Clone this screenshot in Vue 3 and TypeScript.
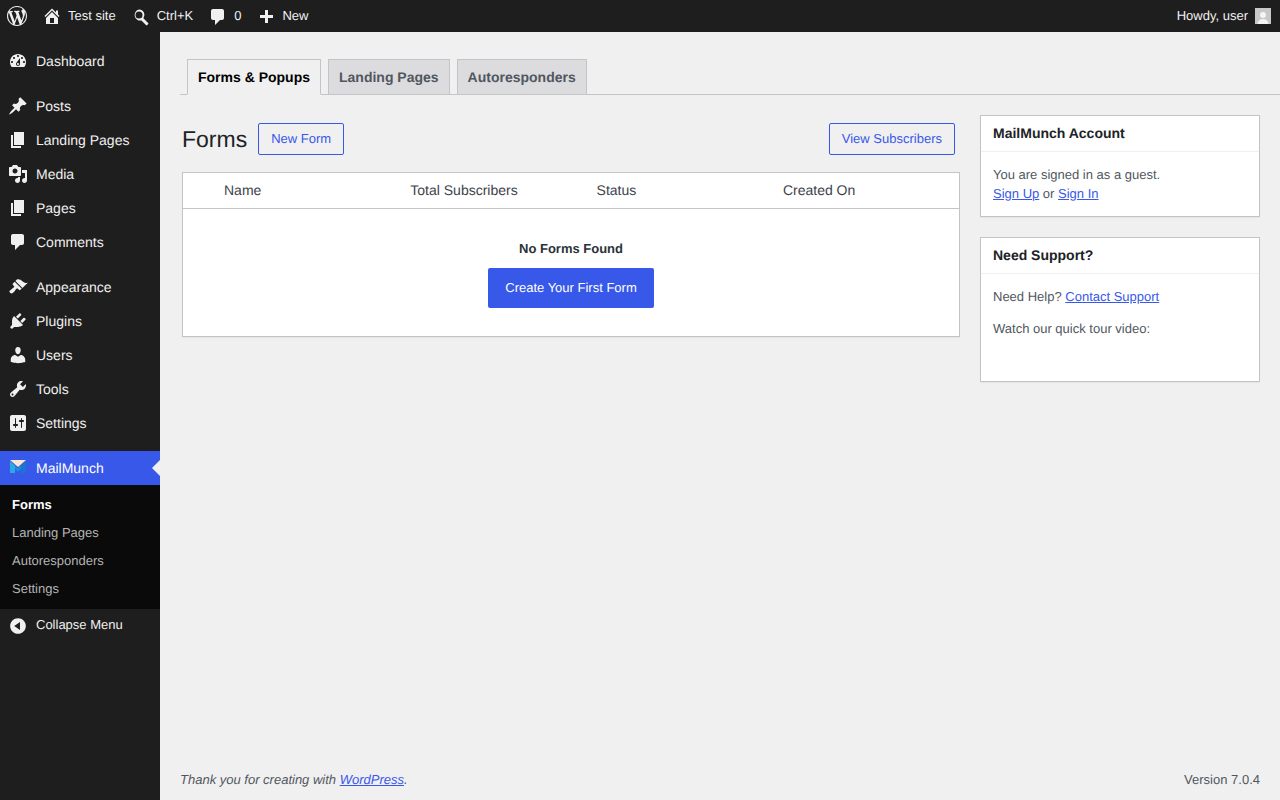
<script setup lang="ts">
type MenuItem = { label: string; icon: string; gapBefore?: boolean }

const pageIcon = "M6 15V2h10v13H6zm-1 1h8v2H3V5h2v11z"

const menu: MenuItem[] = [
  { label: "Dashboard", icon: "M3.76 16h12.48c1.1-1.37 1.76-3.11 1.76-5 0-4.42-3.58-8-8-8s-8 3.58-8 8c0 1.89.66 3.63 1.76 5zM10 4c.55 0 1 .45 1 1s-.45 1-1 1-1-.45-1-1 .45-1 1-1zM6 6c.55 0 1 .45 1 1s-.45 1-1 1-1-.45-1-1 .45-1 1-1zm8 0c.55 0 1 .45 1 1s-.45 1-1 1-1-.45-1-1 .45-1 1-1zm-5.37 5.55L12 7v6c0 1.1-.9 2-2 2s-2-.9-2-2c0-.57.24-1.08.63-1.45zM4 10c.55 0 1 .45 1 1s-.45 1-1 1-1-.45-1-1 .45-1 1-1zm12 0c.55 0 1 .45 1 1s-.45 1-1 1-1-.45-1-1 .45-1 1-1zm-5 3c0-.55-.45-1-1-1s-1 .45-1 1 .45 1 1 1 1-.45 1-1z" },
  { label: "Posts", gapBefore: true, icon: "M10.44 3.02l1.82-1.82 6.36 6.35-1.83 1.82c-1.05-.68-2.48-.57-3.41.36l-.75.75c-.92.93-1.04 2.35-.35 3.41l-1.83 1.82-2.41-2.41-2.8 2.79c-.42.42-3.38 2.71-3.8 2.29s1.86-3.39 2.28-3.81l2.79-2.79L4.1 9.36l1.83-1.82c1.05.69 2.48.57 3.4-.36l.75-.75c.93-.92 1.05-2.35.36-3.41z" },
  { label: "Landing Pages", icon: pageIcon },
  { label: "Media", icon: "M13 11V4c0-.55-.45-1-1-1h-1.67L9 1H5L3.67 3H2c-.55 0-1 .45-1 1v7c0 .55.45 1 1 1h10c.55 0 1-.45 1-1zM7 4.5c1.38 0 2.5 1.12 2.5 2.5S8.38 9.5 7 9.5 4.5 8.38 4.5 7 5.62 4.5 7 4.5zM14 6h5v10.5c0 1.38-1.12 2.5-2.5 2.5S14 17.88 14 16.5s1.12-2.5 2.5-2.5c.17 0 .34.02.5.05V9h-3V6zm-4 8.05V13h2v3.5c0 1.38-1.12 2.5-2.5 2.5S7 17.88 7 16.5 8.12 14 9.5 14c.17 0 .34.02.5.05z" },
  { label: "Pages", icon: pageIcon },
  { label: "Comments", icon: "M5 2h9c1.1 0 2 .9 2 2v7c0 1.1-.9 2-2 2h-2l-5 5v-5H5c-1.1 0-2-.9-2-2V4c0-1.1.9-2 2-2z" },
  { label: "Appearance", gapBefore: true, icon: "M14.48 11.06L7.41 3.99l1.5-1.5c.5-.56 2.3-.47 3.51.32 1.21.8 1.43 1.28 2.91 2.1 1.18.64 2.45 1.26 4.45.85zm-.71.71L6.7 4.7 4.93 6.47c-.39.39-.39 1.02 0 1.41l1.06 1.06c.39.39.39 1.03 0 1.42-.6.6-1.43 1.11-2.21 1.69-.35.26-.7.53-1.01.84C1.43 13.23.78 14.4 2.1 15.7c1.31 1.32 2.48.67 3.8-.67.31-.31.58-.66.84-1.01.58-.78 1.09-1.61 1.69-2.21.39-.39 1.03-.39 1.42 0l1.06 1.06c.39.39 1.02.39 1.41 0z" },
  { label: "Plugins", icon: "M13.11 4.36L9.87 7.6 8 5.73l3.24-3.24c.35-.34 1.05-.2 1.56.32.52.51.66 1.21.31 1.55zm-8 1.77l.91-1.12 9.01 9.01-1.19.84c-.71.71-2.63 1.16-3.82 1.16H6.14L4.9 17.26c-.59.59-1.54.59-2.12 0-.59-.58-.59-1.53 0-2.12l1.24-1.24v-3.88c0-1.13.4-3.19 1.09-3.89zm7.26 3.97l3.24-3.24c.34-.35 1.04-.21 1.55.31.52.51.66 1.21.31 1.55l-3.24 3.25z" },
  { label: "Users", icon: "M10 9.25c-2.27 0-2.73-3.44-2.73-3.44C7 4.02 7.82 2 9.97 2c2.16 0 2.98 2.02 2.71 3.81 0 0-.41 3.44-2.68 3.44zm0 2.57L12.72 10c2.39 0 4.52 2.33 4.52 4.53v2.49s-3.65 1.13-7.24 1.13c-3.65 0-7.24-1.13-7.24-1.13v-2.49c0-2.25 1.94-4.48 4.47-4.48z" },
  { label: "Tools", icon: "M16.68 9.77c-1.34 1.34-3.3 1.67-4.95.99l-5.41 6.52c-.99.99-2.59.99-3.58 0s-.99-2.59 0-3.57l6.52-5.42c-.68-1.65-.35-3.61.99-4.95 1.28-1.28 3.12-1.62 4.72-1.06l-2.89 2.89 2.82 2.82 2.86-2.87c.53 1.58.18 3.39-1.08 4.65zM3.81 16.21c.4.39 1.04.39 1.43 0 .4-.4.4-1.04 0-1.43-.39-.4-1.03-.4-1.43 0-.39.39-.39 1.03 0 1.43z" },
  { label: "Settings", icon: "M18 16V4c0-1.1-.9-2-2-2H4c-1.1 0-2 .9-2 2v12c0 1.1.9 2 2 2h12c1.1 0 2-.9 2-2zM8 11h1c.55 0 1 .45 1 1s-.45 1-1 1H8v1.5c0 .28-.22.5-.5.5s-.5-.22-.5-.5V13H6c-.55 0-1-.45-1-1s.45-1 1-1h1V5.5c0-.28.22-.5.5-.5s.5.22.5.5V11zm5-2h-1c-.55 0-1-.45-1-1s.45-1 1-1h1V5.5c0-.28.22-.5.5-.5s.5.22.5.5V7h1c.55 0 1 .45 1 1s-.45 1-1 1h-1v5.5c0 .28-.22.5-.5.5s-.5-.22-.5-.5V9z" },
]

const submenu = ["Forms", "Landing Pages", "Autoresponders", "Settings"]
const tabs = ["Forms & Popups", "Landing Pages", "Autoresponders"]
const columns = ["Name", "Total Subscribers", "Status", "Created On"]

const wpLogo = "M20 10c0-5.51-4.49-10-10-10C4.48 0 0 4.49 0 10c0 5.52 4.48 10 10 10 5.51 0 10-4.48 10-10zM7.78 15.37L4.37 6.22c.55-.02 1.17-.08 1.17-.08.5-.06.44-1.13-.06-1.11 0 0-1.45.11-2.37.11-.18 0-.37 0-.58-.01C4.12 2.69 6.87 1.11 10 1.11c2.33 0 4.45.87 6.05 2.34-.68-.11-1.65.39-1.65 1.58 0 .74.45 1.36.9 2.1.35.61.55 1.36.55 2.46 0 1.49-1.4 5-1.4 5l-3.03-8.37c.54-.02.82-.17.82-.17.5-.05.44-1.25-.06-1.22 0 0-1.44.12-2.38.12-.87 0-2.33-.12-2.33-.12-.5-.03-.56 1.2-.06 1.22l.92.08 1.26 3.41zM17.41 10c.24-.64.74-1.87.43-4.25.7 1.29 1.05 2.71 1.05 4.25 0 3.29-1.73 6.24-4.4 7.78.97-2.59 1.94-5.2 2.92-7.78zM6.1 18.09C3.12 16.65 1.11 13.53 1.11 10c0-1.3.23-2.48.72-3.59C3.25 10.3 4.67 14.2 6.1 18.09zm4.03-6.63l2.58 6.98c-.86.29-1.76.45-2.71.45-.79 0-1.57-.11-2.29-.33.81-2.38 1.62-4.74 2.42-7.1z"
</script>

<template>
  <div class="page">
    <header class="adminbar">
      <div class="bar-left">
        <svg class="wp-logo" viewBox="0 0 20 20"><path :d="wpLogo" /></svg>
        <div class="bar-item">
          <svg class="bar-icon" viewBox="0 0 20 20"><path d="M16 8.5l1.53 1.53-1.06 1.06L10 4.62l-6.47 6.47-1.06-1.06L10 2.5l4 4v-2h2v4zm-6-2.46l6 5.99V18H4v-5.97zM12 17v-5H8v5h4z" /></svg>
          <span>Test site</span>
        </div>
        <div class="bar-item">
          <svg class="bar-icon low" viewBox="0 0 20 20"><path d="M8 2.5a5.5 5.5 0 0 1 4.4 8.8l4.9 4.9c.2.2.2.5 0 .7l-1.4 1.4c-.2.2-.5.2-.7 0l-4.8-4.9A5.5 5.5 0 1 1 8 2.5zm0 2a3.5 3.5 0 1 0 0 7 3.5 3.5 0 0 0 0-7z" /></svg>
          <span>Ctrl+K</span>
        </div>
        <div class="bar-item">
          <svg class="bar-icon low" viewBox="0 0 20 20"><path d="M5 2h9c1.1 0 2 .9 2 2v7c0 1.1-.9 2-2 2h-2l-5 5v-5H5c-1.1 0-2-.9-2-2V4c0-1.1.9-2 2-2z" /></svg>
          <span>0</span>
        </div>
        <div class="bar-item">
          <svg class="bar-icon" viewBox="0 0 20 20"><path d="M17 9v3h-5v5H9v-5H4V9h5V4h3v5h5z" /></svg>
          <span>New</span>
        </div>
      </div>
      <div class="bar-right">
        <span>Howdy, user</span>
        <svg class="avatar" viewBox="0 0 16 16">
          <rect width="16" height="16" fill="#c8c8c8" />
          <circle cx="8" cy="7" r="3" fill="#f4f4f4" />
          <path d="M2.5 16c.4-3.4 2.6-5 5.5-5s5.1 1.6 5.5 5z" fill="#f4f4f4" />
        </svg>
      </div>
    </header>

    <div class="body-row">
      <aside class="sidebar">
        <nav class="menu">
          <a v-for="item in menu" :key="item.label" class="menu-item" :class="{ spaced: item.gapBefore }">
            <svg class="menu-icon" viewBox="0 0 20 20"><path :d="item.icon" /></svg>
            <span>{{ item.label }}</span>
          </a>
          <a class="menu-item current">
            <svg class="menu-icon" viewBox="0 0 20 20">
              <path d="M2 2h16l-8 7z" fill="#fbe6d0" />
              <path d="M2 3l5 4.5V15H2z" fill="#29abe2" />
              <path d="M7 7.5l3 2.7 3-2.7V11l-3 2.500L7 11z" fill="#1b8fd6" />
              <path d="M18 3l-5 4.5V15h5z" fill="#1b75d0" />
            </svg>
            <span>MailMunch</span>
          </a>
          <ul class="submenu">
            <li v-for="(sub, i) in submenu" :key="sub" :class="{ active: i === 0 }">{{ sub }}</li>
          </ul>
          <a class="collapse">
            <svg class="menu-icon" viewBox="0 0 20 20"><path d="M10 2.16c4.33 0 7.84 3.51 7.84 7.84s-3.51 7.84-7.84 7.84S2.16 14.33 2.16 10 5.71 2.16 10 2.16zm2 11.72V6.12L6.18 9.97z" /></svg>
            <span>Collapse Menu</span>
          </a>
        </nav>
      </aside>

      <main class="content">
        <div class="tabs">
          <a v-for="(tab, i) in tabs" :key="tab" class="tab" :class="{ on: i === 0 }">{{ tab }}</a>
        </div>

        <div class="columns">
          <section class="left">
            <div class="title-row">
              <h1>Forms</h1>
              <a class="btn-outline">New Form</a>
              <a class="btn-outline push">View Subscribers</a>
            </div>

            <div class="table">
              <div class="thead">
                <div v-for="col in columns" :key="col" class="th">{{ col }}</div>
              </div>
              <div class="empty">
                <strong>No Forms Found</strong>
                <a class="btn-primary">Create Your First Form</a>
              </div>
            </div>
          </section>

          <aside class="right">
            <div class="card">
              <h2>MailMunch Account</h2>
              <div class="card-body">
                <p>You are signed in as a guest.<br /><a>Sign Up</a> or <a>Sign In</a></p>
              </div>
            </div>
            <div class="card">
              <h2>Need Support?</h2>
              <div class="card-body support">
                <p>Need Help? <a>Contact Support</a></p>
                <p>Watch our quick tour video:</p>
              </div>
            </div>
          </aside>
        </div>

        <footer class="footer">
          <em>Thank you for creating with <a>WordPress</a>.</em>
          <span>Version 7.0.4</span>
        </footer>
      </main>
    </div>
  </div>
</template>

<style>
html,
body {
  margin: 0;
  background: #f0f0f1;
}
</style>

<style scoped>
.page {
  display: flex;
  flex-direction: column;
  height: 800px;
  overflow: hidden;
  font-family: "Liberation Sans", Arial, sans-serif;
  font-size: 13px;
  line-height: 1.4;
  color: #3c434a;
  background: #f0f0f1;
  text-rendering: geometricPrecision;
}

.adminbar {
  display: flex;
  justify-content: space-between;
  align-items: center;
  height: 32px;
  flex-shrink: 0;
  background: #1e1e1e;
  color: #f0f0f0;
}

.bar-left {
  display: flex;
  align-items: center;
  padding-left: 7px;
}

.wp-logo {
  width: 20px;
  height: 20px;
  fill: #f0f0f0;
  margin-right: 15px;
}

.bar-item {
  display: flex;
  align-items: center;
  gap: 6px;
  margin-right: 15px;
}

.bar-icon {
  width: 20px;
  height: 20px;
  fill: #f0f0f0;
}

.bar-icon.low {
  margin-top: 2px;
}

.bar-right {
  display: flex;
  align-items: center;
  gap: 7px;
  padding-right: 9px;
}

.avatar {
  width: 16px;
  height: 16px;
}

.body-row {
  display: flex;
  flex: 1;
  min-height: 0;
}

.sidebar {
  width: 160px;
  flex-shrink: 0;
  background: #1e1e1e;
  padding-top: 12px;
}

.menu-item {
  display: flex;
  align-items: center;
  height: 34px;
  color: #f0f0f0;
  font-size: 14px;
}

.menu-item.spaced {
  margin-top: 11px;
}

.menu-icon {
  width: 20px;
  height: 20px;
  margin: 0 8px;
  fill: #f0f0f0;
  flex-shrink: 0;
}

.menu-item span {
  line-height: 18px;
}

.menu-item.current {
  position: relative;
  margin-top: 11px;
  background: #3858e9;
  color: #fff;
}

.menu-item.current::after {
  content: "";
  position: absolute;
  right: 0;
  top: 9px;
  border: 8px solid transparent;
  border-right-color: #f0f0f1;
  border-left-width: 0;
}

.submenu {
  list-style: none;
  margin: 0;
  padding: 6px 0 6px;
  background: #0a0a0a;
  color: #b4b4b4;
  font-size: 13px;
}

.submenu li {
  height: 28px;
  line-height: 28px;
  padding-left: 12px;
}

.submenu li.active {
  color: #fff;
  font-weight: 600;
}

.collapse {
  display: flex;
  align-items: flex-start;
  color: #f0f0f0;
  font-size: 13px;
  padding-top: 7px;
}

.collapse span {
  line-height: 18px;
}

.content {
  flex: 1;
  min-width: 0;
  display: flex;
  flex-direction: column;
  padding-left: 20px;
}

.tabs {
  display: flex;
  gap: 7px;
  height: 35px;
  margin-top: 27px;
  padding-left: 7px;
  border-bottom: 1px solid #c3c4c7;
}

.tab {
  height: 36px;
  box-sizing: border-box;
  padding: 0 10px;
  line-height: 35px;
  font-size: 14px;
  font-weight: 600;
  color: #50575e;
  background: #dcdcde;
  border: 1px solid #c3c4c7;
}

.tab.on {
  background: #f0f0f1;
  color: #000;
  border-bottom-color: #f0f0f1;
}

.columns {
  display: flex;
  align-items: flex-start;
  padding: 20px 20px 0 2px;
  gap: 20px;
  flex: 1;
}

.left {
  flex: 1;
  min-width: 0;
}

.title-row {
  display: flex;
  align-items: center;
  height: 32px;
  margin-top: 8px;
  padding-right: 5px;
}

h1 {
  margin: 0 11px 0 0;
  font-size: 23px;
  font-weight: 400;
  line-height: 32px;
  color: #1d2327;
}

.btn-outline {
  box-sizing: border-box;
  height: 32px;
  line-height: 30px;
  padding: 0 12px;
  border: 1px solid #3858e9;
  border-radius: 2px;
  color: #3858e9;
}

.push {
  margin-left: auto;
}

.table {
  margin-top: 17px;
  background: #fff;
  border: 1px solid #c3c4c7;
  box-shadow: 0 1px 1px rgba(0, 0, 0, 0.04);
}

.thead {
  display: grid;
  grid-template-columns: repeat(4, 186.3px);
  padding-left: 30px;
  height: 35px;
  border-bottom: 1px solid #c3c4c7;
}

.th {
  padding-left: 11px;
  font-size: 14px;
  line-height: 35px;
  color: #3c434a;
}

.empty {
  display: flex;
  flex-direction: column;
  align-items: center;
  padding: 30px 0 28px;
}

.empty strong {
  line-height: 19px;
  color: #2c3338;
}

.btn-primary {
  margin-top: 10px;
  height: 40px;
  line-height: 40px;
  padding: 0 17px;
  background: #3858e9;
  color: #fff;
  border-radius: 2px;
}

.right {
  width: 280px;
  flex-shrink: 0;
  display: flex;
  flex-direction: column;
  gap: 20px;
}

.card {
  box-sizing: border-box;
  background: #fff;
  border: 1px solid #c3c4c7;
  box-shadow: 0 1px 1px rgba(0, 0, 0, 0.04);
}

.card h2 {
  margin: 0;
  height: 35px;
  padding: 0 12px;
  font-size: 14px;
  font-weight: 600;
  line-height: 34px;
  color: #1d2327;
  border-bottom: 1px solid #f0f0f1;
}

.card-body {
  padding: 13px 12px;
  color: #50575e;
}

.card-body p {
  margin: 0;
  line-height: 19px;
}

.card-body.support {
  padding-bottom: 43px;
}

.card-body.support p + p {
  margin-top: 13px;
}

a {
  cursor: pointer;
}

.card-body a,
.footer a {
  color: #3858e9;
  text-decoration: underline;
}

.footer {
  display: flex;
  justify-content: space-between;
  padding: 0 20px 11px 0;
  line-height: 18px;
  color: #50575e;
}
</style>
